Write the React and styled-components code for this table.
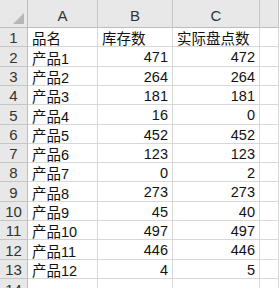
import React from "react";
import styled, { createGlobalStyle } from "styled-components";

const Global = createGlobalStyle`
  html, body { margin: 0; padding: 0; background: #fff; overflow: hidden; }
  body { width: 279px; height: 288px; }
`;

const Sheet = styled.div`
  width: 279px;
  height: 288px;
  overflow: hidden;
  font-family: "Liberation Sans", "Noto Sans CJK SC", sans-serif;
  color: #111;
`;

const Row = styled.div`
  display: grid;
  grid-template-columns: 28px 70px 75px 87px 1fr;
  height: ${(p) => p.$h}px;
`;

const Cell = styled.div`
  box-sizing: border-box;
  border-right: 1px solid #d8d8d8;
  border-bottom: 1px solid #d8d8d8;
  display: flex;
  align-items: center;
  justify-content: ${(p) => (p.$num ? "flex-end" : "flex-start")};
  padding: 1px 4px 0 4px;
  font-size: 14.5px;
  white-space: nowrap;
  overflow: hidden;
`;

const ColHead = styled.div`
  box-sizing: border-box;
  background: #e8e8e8;
  border-right: 1px solid #c6c6c6;
  border-bottom: 1px solid #bdbdbd;
  display: flex;
  align-items: flex-end;
  justify-content: center;
  padding-bottom: 3px;
  font-size: 15px;
  color: #333;
`;

const RowHead = styled.div`
  box-sizing: border-box;
  background: #e8e8e8;
  border-right: 1px solid #bdbdbd;
  border-bottom: 1px solid #c6c6c6;
  display: flex;
  align-items: center;
  justify-content: center;
  padding-top: 1px;
  font-size: 15px;
  color: #333;
`;

const Corner = styled.div`
  box-sizing: border-box;
  background: #e8e8e8;
  border-right: 1px solid #bdbdbd;
  border-bottom: 1px solid #bdbdbd;
  position: relative;
  &::after {
    content: "";
    position: absolute;
    right: 3px;
    bottom: 3px;
    width: 0;
    height: 0;
    border-left: 11px solid transparent;
    border-bottom: 11px solid #b6b6b6;
  }
`;

const data = [
  ["品名", "库存数", "实际盘点数"],
  ["产品1", 471, 472],
  ["产品2", 264, 264],
  ["产品3", 181, 181],
  ["产品4", 16, 0],
  ["产品5", 452, 452],
  ["产品6", 123, 123],
  ["产品7", 0, 2],
  ["产品8", 273, 273],
  ["产品9", 45, 40],
  ["产品10", 497, 497],
  ["产品11", 446, 446],
  ["产品12", 4, 5],
  ["", "", ""],
];

const heights = [19, 20, 19, 19, 20, 19, 19, 19, 20, 19, 19, 20, 19, 20];

export default function App() {
  return (
    <>
      <Global />
      <Sheet>
        <Row $h={28}>
          <Corner />
          <ColHead>A</ColHead>
          <ColHead>B</ColHead>
          <ColHead>C</ColHead>
          <ColHead />
        </Row>
        {data.map((r, i) => (
          <Row key={i} $h={heights[i]}>
            <RowHead>{i + 1}</RowHead>
            <Cell>{r[0]}</Cell>
            <Cell $num={i > 0}>{r[1]}</Cell>
            <Cell $num={i > 0}>{r[2]}</Cell>
            <Cell />
          </Row>
        ))}
      </Sheet>
    </>
  );
}
